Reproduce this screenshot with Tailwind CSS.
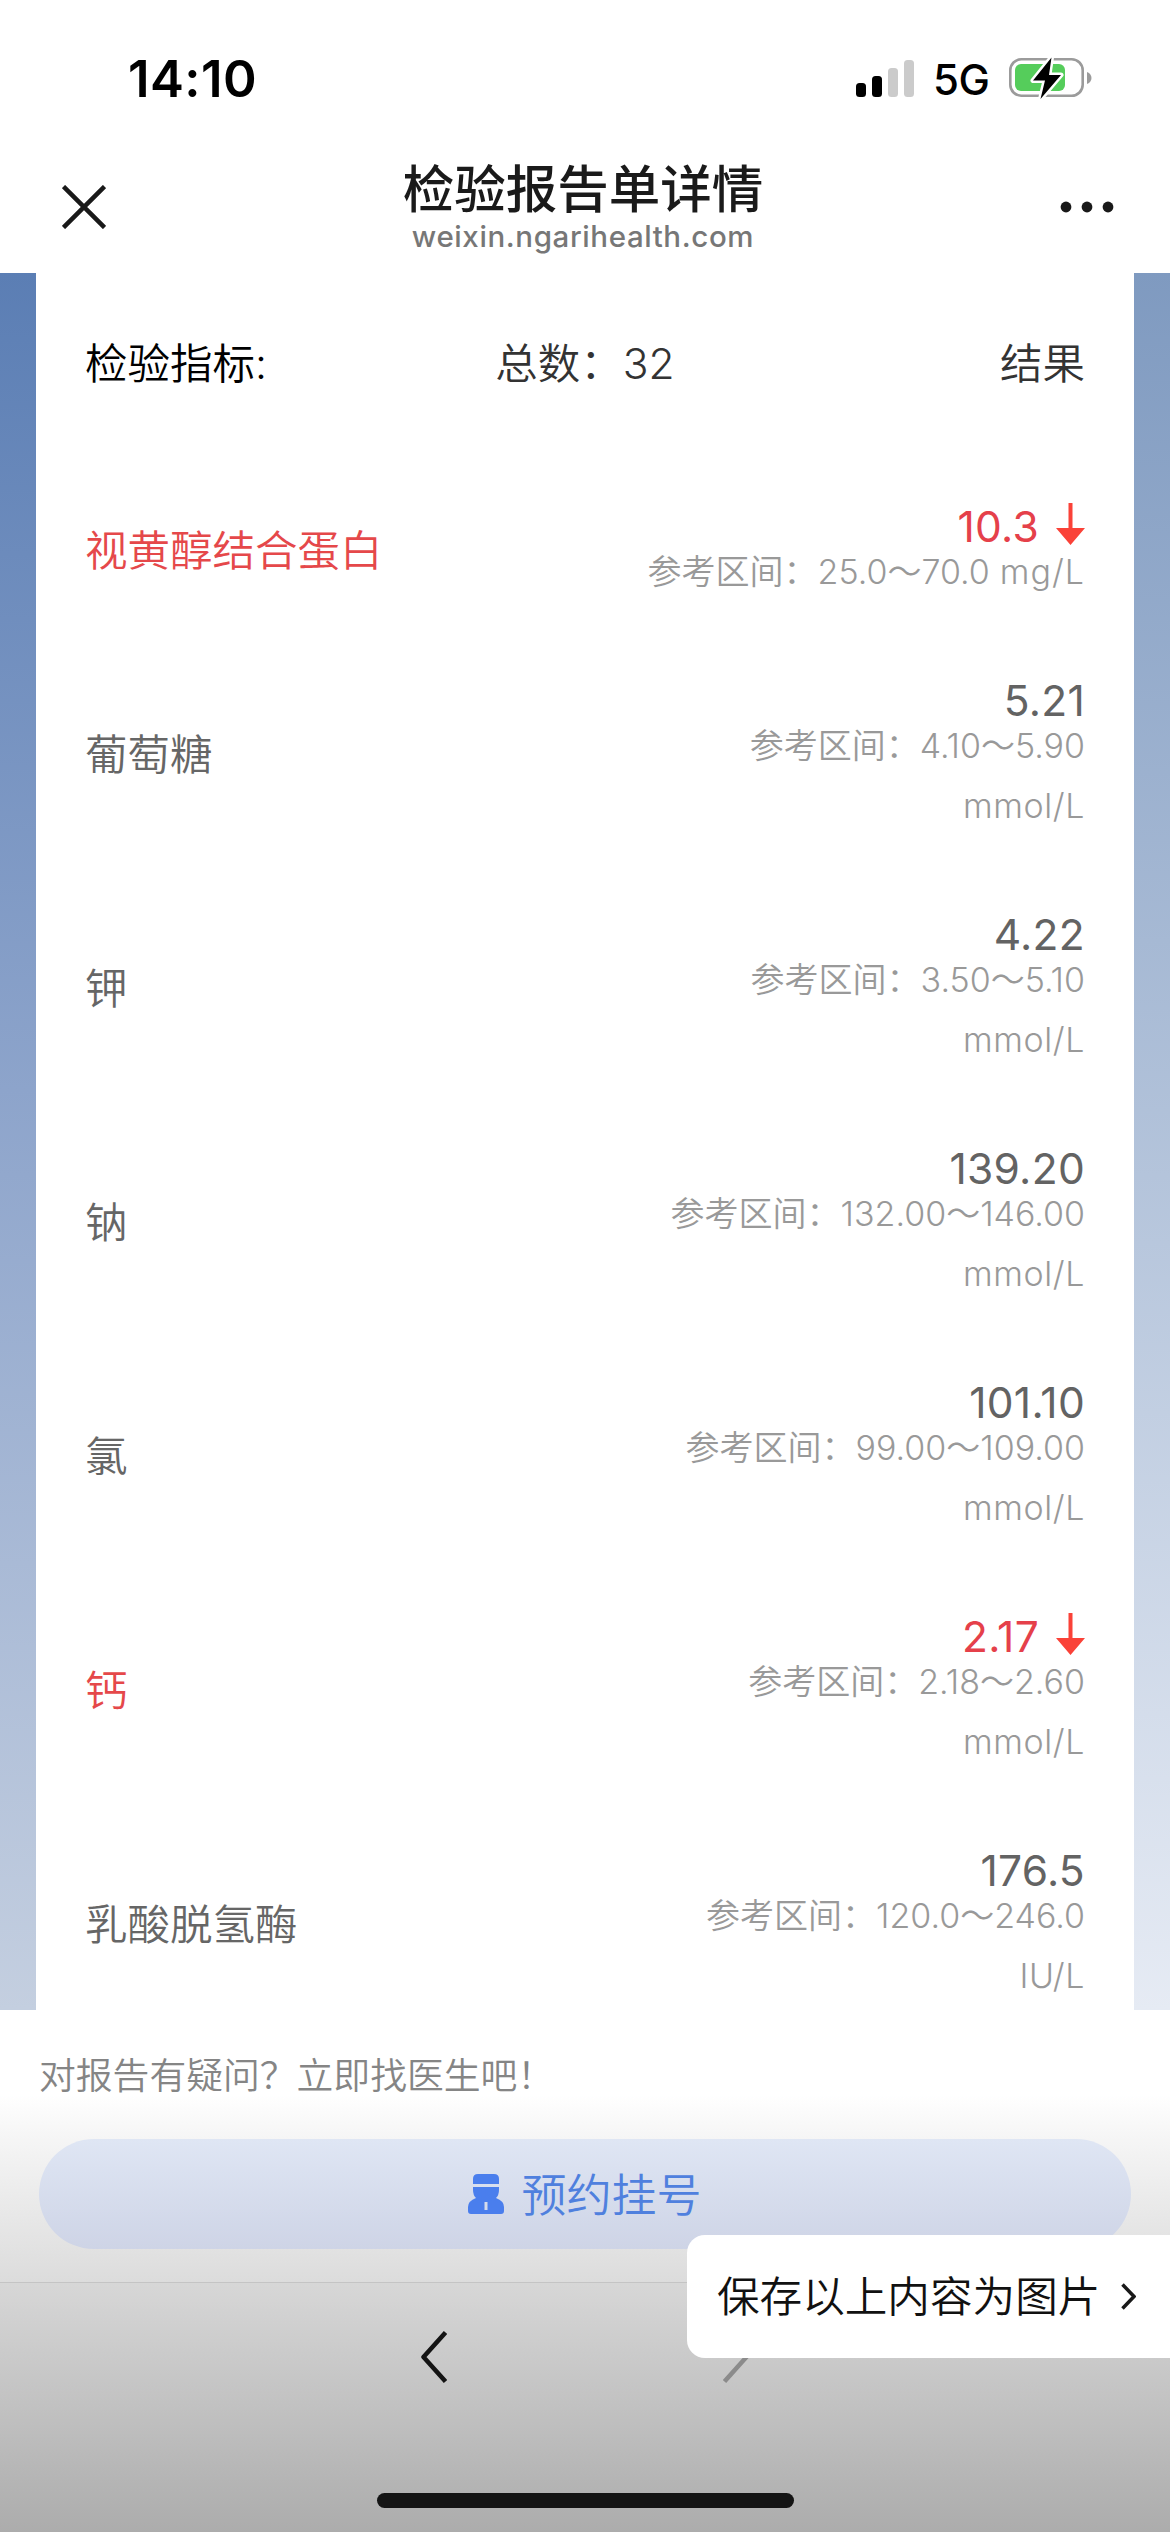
<!DOCTYPE html>
<html lang="zh-CN">
<head>
<meta charset="utf-8">
<title>检验报告单详情</title>
<script src="https://cdn.jsdelivr.net/npm/@tailwindcss/browser@4"></script>
</head>
<body class="w-[1170px] h-[2532px] overflow-hidden bg-white font-['Inter','Noto_Sans_CJK_SC',sans-serif]">
<div class="relative flex flex-col w-[1170px] h-[2532px] overflow-hidden whitespace-nowrap font-[350]">

  <!-- status bar -->
  <header class="h-[273px] shrink-0 flex flex-col">
    <div class="h-[156px] flex items-center justify-between pl-[128px] pr-[78px]">
      <div class="text-[51px] leading-none font-semibold text-black tracking-[0.4px]">14:10</div>
      <div class="flex items-center">
        <svg class="w-[58px] h-[37px]" viewBox="0 0 58 37"><rect x="0" y="23" width="10" height="14" rx="3.5"/><rect x="16" y="16" width="10" height="21" rx="3.5"/><rect x="32" y="8" width="10" height="29" rx="3.5" fill="#cbcbcb"/><rect x="48" y="0" width="10" height="37" rx="3.5" fill="#cbcbcb"/></svg>
        <div class="ml-[19px] w-[56px] pt-[3px] text-[42px] leading-none font-medium text-black tracking-[-0.5px]">5G</div>
        <svg class="ml-[20px] w-[83px] h-[44px]" viewBox="0 0 83 44"><rect x="1.3" y="3.3" width="72.4" height="36.4" rx="11" fill="none" stroke="#9b9b9b" stroke-width="2.6"/><path d="M78 16c6 2 6 10 0 12z" fill="#9b9b9b"/><rect x="6" y="8" width="50" height="27" rx="6" fill="#55cd5b"/><path d="M42.500 1.500 24 24.500H36L31.500 43 52 19H40Z" fill="#000" stroke="#fff" stroke-width="5" stroke-linejoin="round" paint-order="stroke"/></svg>
      </div>
    </div>
    <div class="flex-1 flex items-start justify-between pl-[62px] pr-[56px]">
      <svg class="mt-[29px] w-[44px] h-[44px]" viewBox="0 0 44 44" fill="none" stroke="#191919" stroke-width="4.500"><path d="M1.500 1.500 42.500 42.500M42.500 1.500 1.500 42.500"/></svg>
      <div class="flex flex-col items-center">
        <div class="h-[64px] pt-[3px] flex items-center text-[51.500px] leading-none font-medium text-[#1a1a1a]">检验报告单详情</div>
        <div class="text-[29.500px] leading-[32px] tracking-[0.6px] font-[450] text-[#777]">weixin.ngarihealth.com</div>
      </div>
      <svg class="mt-[45px] w-[54px] h-[12px]" viewBox="0 0 54 12" fill="#191919"><circle cx="6" cy="6" r="5.400"/><circle cx="27" cy="6" r="5.400"/><circle cx="48" cy="6" r="5.400"/></svg>
    </div>
  </header>

  <!-- report -->
  <main class="h-[1737px] shrink-0 flex justify-between overflow-hidden">
    <div class="w-[36px] bg-linear-to-b from-[#5b7eb4] via-[#8da4cb] via-47% to-[#c4cfe0]"></div>
    <section class="flex-1 bg-white px-[49px]">
      <div class="h-[180px] pt-[3px] grid grid-cols-3 items-center text-[42.500px] leading-none text-[#333]">
        <div class="text-black">检验指标:</div>
        <div class="text-center">总数：32</div>
        <div class="text-right">结果</div>
      </div>
      <div id="rows" class="pt-[43px] flex flex-col gap-[68px]"></div>
    </section>
    <div class="w-[36px] bg-linear-to-b from-[#7f9ac0] via-[#b4c4db] via-52% to-[#e6ebf4]"></div>
  </main>

  <!-- appointment bar -->
  <section class="h-[272px] shrink-0 px-[39px] bg-linear-to-b from-white from-31% via-[#f5f5f5] via-48% to-[#dcdcdc] flex flex-col">
    <div class="h-[129px] pt-[3px] flex items-center text-[36.800px] leading-none text-[#858585]">对报告有疑问？立即找医生吧！</div>
    <div class="h-[110px] rounded-full bg-linear-to-b from-[#dfe6f4] to-[#ced4e6] flex items-center justify-center gap-[17px] text-[45px] leading-none text-[#4f80de]">
      <svg class="w-[36px] h-[40px]" viewBox="0 0 36 40" fill="#4a7eed"><path d="M5 10V5Q5 0 10 0H26Q31 0 31 5V10Z"/><path fill-rule="evenodd" d="M5 13H31V16Q31 21 28 24Q36 27 36 33V37Q36 40 33 40H3Q0 40 0 37V33Q0 27 8 24Q5 21 5 16ZM16.500 28V36H19.500V28Z"/></svg>
      <span class="pt-[2px]">预约挂号</span>
    </div>
  </section>

  <!-- browser toolbar -->
  <footer class="flex-1 border-t border-[#c4c4c4] bg-linear-to-b from-[#d7d7d7] to-[#acacac] flex flex-col items-center">
    <div class="w-[328px] h-[210px] pt-[48px] flex items-start justify-between">
      <svg class="w-[26px] h-[52px]" viewBox="0 0 26 52" fill="none" stroke="#141414" stroke-width="4.500" stroke-linejoin="round"><path d="M24.500 1.500 2.500 26 24.500 50.500"/></svg>
      <svg class="w-[26px] h-[52px]" viewBox="0 0 26 52" fill="none" stroke="#8b8b8b" stroke-width="4.500"><path d="M1.500 1.500 23.500 26 1.500 50.500"/></svg>
    </div>
    <div class="w-[417px] h-[15px] rounded-full bg-[#141414]"></div>
  </footer>

  <!-- save-as-image prompt -->
  <div class="absolute right-0 top-[2235px] w-[483px] h-[123px] rounded-l-[18px] bg-white pl-[30px] pr-[34px] flex items-center justify-between text-[42.600px] leading-none text-[#111]">
    <span class="pt-[2px]">保存以上内容为图片</span>
    <svg class="w-[15px] h-[27px]" viewBox="0 0 15 27" fill="none" stroke="#191919" stroke-width="3.500"><path d="M1.500 1.500 13 13.500 1.500 25.500"/></svg>
  </div>
</div>
<script>
const rows = [
  ['视黄醇结合蛋白', '10.3', '25.0～70.0<span class="ml-[10px] tracking-[1px]">mg/L</span>', '', true],
  ['葡萄糖', '5.21', '4.10～5.90', 'mmol/L'],
  ['钾', '4.22', '3.50～5.10', 'mmol/L'],
  ['钠', '139.20', '132.00～146.00', 'mmol/L'],
  ['氯', '101.10', '99.00～109.00', 'mmol/L'],
  ['钙', '2.17', '2.18～2.60', 'mmol/L', true],
  ['乳酸脱氢酶', '176.5', '120.0～246.0', 'IU/L']
];
const arrow = '<svg class="ml-[17px] -translate-y-[3px] w-[29px] h-[42px]" viewBox="0 0 29 42" fill="#fa4238"><path d="M12.500 0H16.500V25H29L14.500 42 0 25H12.500Z"/></svg>';
document.getElementById('rows').innerHTML = rows.map(([name, value, range, unit, low]) => `
  <div class="flex items-center justify-between shrink-0">
    <div class="pt-[3px] text-[42.500px] leading-[60px] ${low ? 'text-[#e5484a]' : 'text-[#666]'}">${name}</div>
    <div class="flex flex-col items-end">
      <div class="h-[46px] pt-[15px] flex items-center text-[42.500px] leading-[32px] font-[380] tracking-[0.3px] ${low ? 'text-[#e5404a]' : 'text-[#636363]'}">${value}${low ? arrow : ''}</div>
      <div class="text-[34px] leading-[60px] text-[#999]">参考区间：${range}</div>
      ${unit ? `<div class="text-[34px] leading-[60px] tracking-[0.6px] text-[#999]">${unit}</div>` : ''}
    </div>
  </div>`).join('');
</script>
</body>
</html>
